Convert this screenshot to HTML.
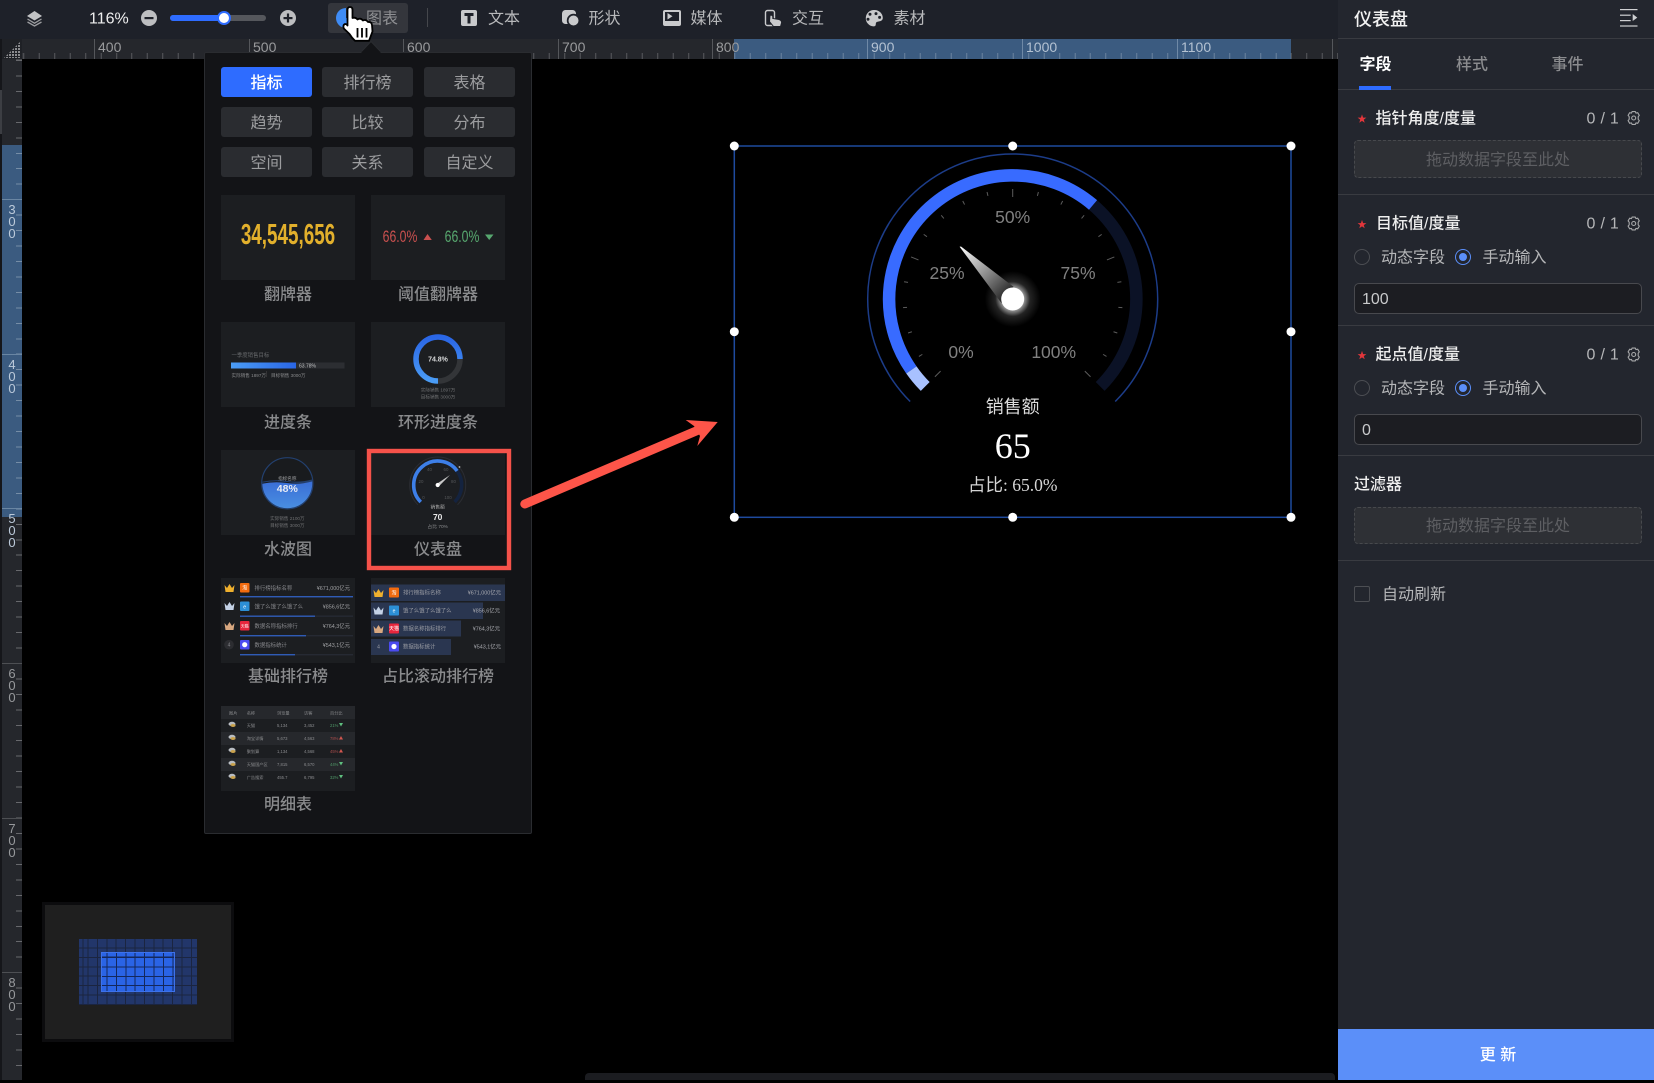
<!DOCTYPE html>
<html lang="zh-CN"><head><meta charset="utf-8"><title>仪表盘</title>
<style>
*{box-sizing:border-box;margin:0;padding:0}
html,body{width:1654px;height:1080px;overflow:hidden;background:#000;font-family:"Liberation Sans","Noto Sans CJK SC",sans-serif}
div,span{position:absolute}
.t{white-space:nowrap;transform:translateY(calc(-50% + 2px));line-height:1.3}
.m{white-space:nowrap;transform:translate(-50%,calc(-50% + 2px));line-height:1.3;text-align:center}
.btn{width:91px;height:30px;background:#2a2c30;border-radius:3px;color:#9c9d9f;font-size:16px;line-height:33px;text-align:center}
.lb{font-size:16px;color:#8a8b8d;font-weight:500}
.th{background:#1c1e21;width:134px;height:85px}
.hl{height:1px;left:1338px;width:316px;background:#393b41}
.sec{font-size:16px;color:#eee;font-weight:500}
.cnt{font-size:16px;color:#b5b6b8;letter-spacing:.3px}
.drop{left:1354px;width:288px;background:#2e3035;border:1px dashed #47494d;border-radius:4px;color:#5e5f63;font-size:16px;text-align:center}
.inp{left:1354px;width:288px;height:31px;background:#1c1d22;border:1px solid #48494e;border-radius:5px;color:#c8c9cb;font-size:16px;line-height:31px;padding-left:7px}
.r0{width:16px;height:16px;border:1px solid #4c4e53;border-radius:50%}
.r1{width:16px;height:16px;border:1px solid #5b8ff9;border-radius:50%}
.r1:after{content:"";position:absolute;left:3px;top:3px;width:8px;height:8px;background:#5b8ff9;border-radius:50%}
.op{font-size:16px;color:#b5b6b8}
.rn{font-size:14px;color:#9a9b9d;margin-top:-3px}
.rd{font-size:13px;color:#97999c;line-height:12px;width:20px;left:2px;text-align:center;letter-spacing:0;margin-top:1.5px}
.maj{background:#55575b}
.tool{font-size:16px;color:#b8b9bb}
</style></head>
<body>
<!-- toolbar -->
<div style="left:0;top:0;width:1338px;height:39px;background:#1e2129"></div>
<!-- ruler -->
<div style="left:0;top:39px;width:1338px;height:20px;background:#25272c"></div>
<div style="left:734px;top:39px;width:557px;height:20px;background:#3b5b80"></div>
<div style="left:22px;top:53px;width:1316px;height:6px;background:repeating-linear-gradient(90deg,rgba(255,255,255,.24) 0 1px,transparent 1px 15.46px);background-position:1.24px 0"></div>
<div class="maj" style="left:94px;top:39px;width:1px;height:20px"></div><span class="t rn" style="left:98px;top:47.5px">400</span>
<div class="maj" style="left:249px;top:39px;width:1px;height:20px"></div><span class="t rn" style="left:253px;top:47.5px">500</span>
<div class="maj" style="left:403px;top:39px;width:1px;height:20px"></div><span class="t rn" style="left:407px;top:47.5px">600</span>
<div class="maj" style="left:558px;top:39px;width:1px;height:20px"></div><span class="t rn" style="left:562px;top:47.5px">700</span>
<div class="maj" style="left:712px;top:39px;width:1px;height:20px"></div><span class="t rn" style="left:716px;top:47.5px">800</span>
<div style="left:867px;top:39px;width:1px;height:20px;background:#6f89a6"></div><span class="t rn" style="left:871px;top:47.5px;color:#b4c2d2">900</span>
<div style="left:1022px;top:39px;width:1px;height:20px;background:#6f89a6"></div><span class="t rn" style="left:1026px;top:47.5px;color:#b4c2d2">1000</span>
<div style="left:1177px;top:39px;width:1px;height:20px;background:#6f89a6"></div><span class="t rn" style="left:1181px;top:47.5px;color:#b4c2d2">1100</span>
<div class="maj" style="left:1332px;top:39px;width:1px;height:20px"></div>
<!-- left ruler -->
<div style="left:0;top:39px;width:2px;height:1041px;background:#15161a"></div>
<div style="left:0;top:90px;width:2px;height:44px;background:#3c3e43"></div>
<div style="left:2px;top:59px;width:20px;height:1021px;background:#25272c"></div>
<div style="left:2px;top:145px;width:20px;height:372px;background:#3b5b80"></div>
<div style="left:16px;top:59px;width:6px;height:1021px;background:repeating-linear-gradient(180deg,rgba(255,255,255,.3) 0 1px,transparent 1px 15.46px);background-position:0 1px"></div>
<div style="left:2px;top:199px;width:20px;height:1px;background:#6a86a3"></div>
<div style="left:2px;top:354px;width:20px;height:1px;background:#6a86a3"></div>
<div style="left:2px;top:508px;width:20px;height:1px;background:#6a86a3"></div>
<div style="left:2px;top:663px;width:20px;height:1px;background:#4d4f53"></div>
<div style="left:2px;top:818px;width:20px;height:1px;background:#4d4f53"></div>
<div style="left:2px;top:972px;width:20px;height:1px;background:#4d4f53"></div>
<div class="rd" style="top:202px;color:#bccada">3<br>0<br>0</div>
<div class="rd" style="top:357px;color:#bccada">4<br>0<br>0</div>
<div class="rd" style="top:511px;color:#bccada">5<br>0<br>0</div>
<div class="rd" style="top:666px">6<br>0<br>0</div>
<div class="rd" style="top:821px">7<br>0<br>0</div>
<div class="rd" style="top:975px">8<br>0<br>0</div>
<div style="left:2px;top:39px;width:20px;height:20px;background:#1f2126"></div>
<!-- bottom scrollbar -->
<div style="left:585px;top:1073px;width:750px;height:7px;background:#1b1c20;border-radius:4px 4px 0 0"></div>
<!-- minimap -->
<div style="left:42px;top:902px;width:192px;height:140px;background:#1f1f1f;border:3px solid #0c0c0e"></div>
<div style="left:79px;top:939px;width:118px;height:66px;background-color:#22366a;background-image:repeating-linear-gradient(90deg,#1b2540 0 1px,transparent 1px 9.4px),repeating-linear-gradient(180deg,#1b2540 0 1px,transparent 1px 9.4px);background-position:8.5px 8.5px"></div>
<div style="left:101px;top:952px;width:74px;height:40px;background-color:#2a64e6;border:1px solid #3d72ea;background-image:repeating-linear-gradient(90deg,#14285c 0 1px,transparent 1px 9.4px),repeating-linear-gradient(180deg,#14285c 0 1px,transparent 1px 9.4px);background-position:4.5px 4px"></div>
<!-- toolbar contents -->
<span class="t" style="left:89px;top:18px;font-size:16px;color:#eee">116%</span>
<div style="left:170px;top:15px;width:96px;height:6px;background:#55575c;border-radius:3px"></div>
<div style="left:170px;top:15px;width:54px;height:6px;background:#2e6cff;border-radius:3px"></div>
<div style="left:216.5px;top:11px;width:14px;height:14px;background:#fff;border:2px solid #2e6cff;border-radius:50%"></div>
<div style="left:328px;top:3px;width:80px;height:30px;background:#34363c;border-radius:3px"></div>
<span class="t tool" style="left:366px;top:18px;color:#8f9093">图表</span>
<div style="left:427px;top:8px;width:1px;height:19px;background:#45474c"></div>
<span class="t tool" style="left:488px;top:18px">文本</span>
<span class="t tool" style="left:588.5px;top:18px">形状</span>
<span class="t tool" style="left:690.5px;top:18px">媒体</span>
<span class="t tool" style="left:792px;top:18px">交互</span>
<span class="t tool" style="left:893.5px;top:18px">素材</span>
<!-- popup -->
<div style="left:204px;top:52px;width:328px;height:782px;background:#131417;border:1px solid #2a2c30;border-radius:2px"></div>
<div style="left:221px;top:67px;background:#2e6cff;color:#fff;font-weight:500" class="btn">指标</div>
<div style="left:322px;top:67px" class="btn">排行榜</div>
<div style="left:424px;top:67px" class="btn">表格</div>
<div style="left:221px;top:107px" class="btn">趋势</div>
<div style="left:322px;top:107px" class="btn">比较</div>
<div style="left:424px;top:107px" class="btn">分布</div>
<div style="left:221px;top:147px" class="btn">空间</div>
<div style="left:322px;top:147px" class="btn">关系</div>
<div style="left:424px;top:147px" class="btn">自定义</div>
<div class="th" style="left:221px;top:195px"></div><div class="th" style="left:371px;top:195px"></div>
<div class="th" style="left:221px;top:322px"></div><div class="th" style="left:371px;top:322px"></div>
<div class="th" style="left:221px;top:450px"></div><div class="th" style="left:371px;top:450px"></div>
<div class="th" style="left:221px;top:578px"></div><div class="th" style="left:371px;top:578px"></div>
<div class="th" style="left:221px;top:706px"></div>
<span class="m lb" style="left:288px;top:294px">翻牌器</span>
<span class="m lb" style="left:438px;top:294px">阈值翻牌器</span>
<span class="m lb" style="left:288px;top:421.5px">进度条</span>
<span class="m lb" style="left:438px;top:421.5px">环形进度条</span>
<span class="m lb" style="left:288px;top:549px">水波图</span>
<span class="m lb" style="left:438px;top:549px">仪表盘</span>
<span class="m lb" style="left:288px;top:676px">基础排行榜</span>
<span class="m lb" style="left:438px;top:676px">占比滚动排行榜</span>
<span class="m lb" style="left:288px;top:804px">明细表</span>
<!-- flip text -->
<span class="m" style="left:287.5px;top:236px;font-size:29px;font-weight:700;color:#e2b02c;transform:translate(-50%,-50%) scaleX(.65)">34,545,656</span>
<span class="m" style="left:400px;top:237px;font-size:17px;color:#c9504f;transform:translate(-50%,-50%) scaleX(.72)">66.0%</span>
<span class="m" style="left:461.5px;top:237px;font-size:17px;color:#57a86f;transform:translate(-50%,-50%) scaleX(.72)">66.0%</span>

<!-- right panel -->
<div style="left:1338px;top:0;width:316px;height:1080px;background:#23262e"></div>
<span class="t" style="left:1354px;top:17.5px;font-size:18px;color:#f2f2f2;font-weight:500">仪表盘</span>
<div class="hl" style="top:38px"></div>
<span class="t" style="left:1359.5px;top:64px;font-size:16px;color:#fff;font-weight:700">字段</span>
<span class="t" style="left:1456px;top:64px;font-size:16px;color:#8a8b8e;font-weight:500">样式</span>
<span class="t" style="left:1551.5px;top:64px;font-size:16px;color:#8a8b8e;font-weight:500">事件</span>
<div class="hl" style="top:89px"></div>
<div style="left:1359px;top:86px;width:32px;height:3.5px;background:#2e6cff"></div>
<span class="t sec" style="left:1375.5px;top:118px">指针角度/度量</span>
<span class="t cnt" style="left:1586.5px;top:118px">0 / 1</span>
<div class="drop" style="top:140px;height:38px;line-height:39px">拖动数据字段至此处</div>
<div class="hl" style="top:194px"></div>
<span class="t sec" style="left:1376px;top:223px">目标值/度量</span>
<span class="t cnt" style="left:1586.5px;top:223px">0 / 1</span>
<div class="r0" style="left:1354px;top:249px"></div><span class="t op" style="left:1381px;top:257px">动态字段</span>
<div class="r1" style="left:1455px;top:249px"></div><span class="t op" style="left:1482.5px;top:257px">手动输入</span>
<div class="inp" style="top:283px">100</div>
<div class="hl" style="top:325px"></div>
<span class="t sec" style="left:1375.5px;top:354px">起点值/度量</span>
<span class="t cnt" style="left:1586.5px;top:354px">0 / 1</span>
<div class="r0" style="left:1354px;top:380px"></div><span class="t op" style="left:1381px;top:388px">动态字段</span>
<div class="r1" style="left:1455px;top:380px"></div><span class="t op" style="left:1482.5px;top:388px">手动输入</span>
<div class="inp" style="top:414px">0</div>
<div class="hl" style="top:455px"></div>
<span class="t sec" style="left:1354px;top:484px">过滤器</span>
<div class="drop" style="top:507px;height:37px;line-height:38px">拖动数据字段至此处</div>
<div class="hl" style="top:560px"></div>
<div style="left:1354px;top:586px;width:16px;height:16px;border:1px solid #4c4e53;border-radius:2px"></div>
<span class="t op" style="left:1382px;top:594px">自动刷新</span>
<div style="left:1338px;top:1029px;width:316px;height:51px;background:#5b8ff9;color:#fff;font-size:16px;font-weight:500;text-align:center;line-height:54px;padding-left:4px">更 新</div>

<!-- graphics -->
<svg width="1654" height="1080" viewBox="0 0 1654 1080" style="position:absolute;left:0;top:0" font-family="'Liberation Sans','Noto Sans CJK SC',sans-serif">
<defs>
<linearGradient id="ring" x1="0" y1="0" x2="0" y2="1"><stop offset="0" stop-color="#2a66e6"/><stop offset="1" stop-color="#4a9cf5"/></linearGradient>
<linearGradient id="water" x1="0" y1="0" x2="0" y2="1"><stop offset="0" stop-color="#3a6ed6"/><stop offset="1" stop-color="#4a90e2"/></linearGradient>
<linearGradient id="bar" x1="0" y1="0" x2="1" y2="0"><stop offset="0" stop-color="#4a9cf5"/><stop offset="1" stop-color="#2a66e6"/></linearGradient>
<linearGradient id="needle" gradientUnits="userSpaceOnUse" x1="959.6" y1="246.7" x2="1007" y2="295"><stop offset="0" stop-color="#fff"/><stop offset=".55" stop-color="#8f8f8f"/><stop offset="1" stop-color="#2a2a2a"/></linearGradient>
<radialGradient id="glow"><stop offset=".4" stop-color="#fff" stop-opacity=".6"/><stop offset=".62" stop-color="#fff" stop-opacity=".14"/><stop offset="1" stop-color="#fff" stop-opacity="0"/></radialGradient>
<clipPath id="cw"><circle cx="287.3" cy="483.3" r="25"/></clipPath>
<pattern id="dots" width="3" height="3" patternUnits="userSpaceOnUse"><rect width="2" height="2" fill="#8c8d90"/></pattern>
<path id="crown" d="M0 1 2.5 4 5 0 7.5 4 10 1 9 8H1Z"/>
<polygon id="star" points="0,-4.6 1.1,-1.4 4.4,-1.4 1.8,.6 2.7,3.8 0,1.9 -2.7,3.8 -1.8,.6 -4.4,-1.4 -1.1,-1.4" fill="#e2363b"/>
<g id="gear" fill="none" stroke="#a8a9ab" stroke-width="1.1" stroke-linejoin="round"><path d="M-1.6-6.4H1.6L2.3-4.9 4-5.3 5.6-2.6 4.5-1.3V1.3L5.6 2.6 4 5.3 2.3 4.9 1.6 6.4H-1.6L-2.3 4.9-4 5.3-5.6 2.6-4.5 1.3V-1.3L-5.6-2.6-4-5.3-2.3-4.9Z"/><circle r="2"/></g>
</defs>

<!-- corner dots -->
<polygon points="4,58 21,58 21,41" fill="url(#dots)"/>

<!-- layers -->
<polygon points="34.5,11 42,16 34.5,20.5 27,16" fill="#c2c3c5"/>
<path d="M27.5 19 34.5 23.2 41.5 19M27.5 22 34.5 26 41.5 22" fill="none" stroke="#9b9c9f" stroke-width="1.3"/>
<!-- minus plus -->
<circle cx="149" cy="18" r="8" fill="#bdbec0"/><rect x="144.5" y="17" width="9" height="2.2" fill="#1e2129"/>
<circle cx="288" cy="18" r="8" fill="#bdbec0"/><rect x="283.5" y="17" width="9" height="2.2" fill="#1e2129"/><rect x="286.9" y="13.5" width="2.2" height="9" fill="#1e2129"/>
<!-- pie -->
<path d="M346 8A10 10 0 1 0 356 18H346Z" fill="#3f8cf5"/>
<rect x="347.5" y="8" width="4" height="9" fill="#5fb7d8"/>
<!-- toolbar icons -->
<rect x="461" y="10" width="16" height="16" rx="2" fill="#c9cacc"/>
<polygon points="464.5,13 473.5,13 473.5,16 470.5,16 470.5,23.5 467.5,23.5 467.5,16 464.5,16" fill="#1e2129"/>
<rect x="562" y="10" width="14" height="14" rx="3.5" fill="#c9cacc"/>
<circle cx="573.5" cy="20.5" r="6.7" fill="#1e2129"/><circle cx="573.5" cy="20.5" r="5" fill="#c9cacc"/>
<rect x="663" y="10" width="18" height="16" rx="2" fill="#c9cacc"/>
<rect x="665" y="12" width="14" height="9" fill="#1e2129"/>
<polygon points="667.5,13 667.5,19.5 672.5,16.2" fill="#c9cacc"/>
<rect x="765.5" y="10.5" width="9" height="15" rx="2" fill="none" stroke="#c9cacc" stroke-width="1.4"/>
<path d="M770 15.5Q772 14.5 772.8 16.5V18.5L779 19.5Q782 20.5 781.5 23L780.5 26.5H773.5L769.5 21.5Z" fill="#c9cacc" stroke="#1e2129" stroke-width="1"/>
<path d="M874.5 10A8.2 8.2 0 1 0 873.5 26.4C877 26.4 875 23 876.5 22.2 878 21.2 882.8 22 882.8 17.8 882.8 13.5 879 10 874.5 10Z" fill="#c9cacc"/>
<circle cx="870" cy="14.2" r="1.5" fill="#1e2129"/><circle cx="876" cy="13.6" r="1.5" fill="#1e2129"/><circle cx="879.6" cy="17.4" r="1.5" fill="#1e2129"/><circle cx="868" cy="19.2" r="1.5" fill="#1e2129"/>
<!-- popup caret -->
<polygon points="361,52 371,41.5 381,52" fill="#131417"/>
<path d="M361 52 371 41.5 381 52" fill="none" stroke="#2a2c30"/>
<rect x="361.5" y="51.5" width="19" height="2" fill="#131417"/>
<!-- hand cursor -->
<g fill="#fff" stroke="#000" stroke-width="1.8" stroke-linejoin="round">
<path d="M347.5 10Q347.5 7 350 7 352.5 7 352.5 10V18Q355.5 17 357.5 19.5 360.5 17.5 363 20.5 366 19 368 22 371.5 21.5 372 25L372.5 31.5 369 40.8H355Q351.5 37.5 349.5 34L343.8 28.5Q342.5 25 345 24 346.5 23.8 347.5 25.5Z"/>
</g>
<path d="M357.5 28V37.5M362 28V37.5M366.5 28V37.5" stroke="#000" stroke-width="1.8"/>

<!-- thresholds triangles -->
<polygon points="423.5,240 427.5,234 431.8,240" fill="#c9504f"/>
<polygon points="485,234.5 493.5,234.5 489.2,240" fill="#57a86f"/>

<!-- progress thumb -->
<text x="231.5" y="357" font-size="5.4" fill="#66686b">一季度销售目标</text>
<rect x="231" y="362.5" width="113.5" height="6" fill="#2c2e32"/>
<rect x="231" y="362.5" width="65" height="6" fill="url(#bar)"/>
<text x="299" y="367.7" font-size="5" fill="#bfc0c2">63.78%</text>
<text x="231.5" y="377" font-size="4.6" fill="#8a8b8d">实际销售 1897万</text>
<rect x="266" y="371" width=".6" height="6" fill="#444"/>
<text x="271" y="377" font-size="4.6" fill="#8a8b8d">目标销售 3000万</text>

<!-- ring thumb -->
<path d="M460 359A22 22 0 0 1 438 381" fill="none" stroke="#333538" stroke-width="5.5"/>
<path d="M438 381A22 22 0 1 1 460 359" fill="none" stroke="url(#ring)" stroke-width="5.5"/>
<text x="438" y="361.5" font-size="7" font-weight="700" fill="#d8d9da" text-anchor="middle">74.8%</text>
<text x="438" y="391.5" font-size="4.6" fill="#6f7072" text-anchor="middle">实际销售 1897万</text>
<text x="438" y="398.5" font-size="4.6" fill="#6f7072" text-anchor="middle">目标销售 3000万</text>

<!-- liquid thumb -->
<circle cx="287.3" cy="483.3" r="25.6" fill="#191b1e" stroke="#23406f" stroke-width="1.2"/>
<g clip-path="url(#cw)"><path d="M261 482Q274 479 287 481T314 479V482Q300 484 287 482T261 483Z" fill="#24406f"/><path d="M261 484Q274 481 287 483T314 481V510H261Z" fill="url(#water)"/></g>
<text x="287.3" y="480" font-size="4.6" fill="#9c9d9f" text-anchor="middle">指标名称</text>
<text x="287.3" y="492" font-size="10.5" font-weight="700" fill="#e9ecf5" text-anchor="middle">48%</text>
<text x="287.3" y="520" font-size="4.6" fill="#6f7072" text-anchor="middle">实际销售 2100万</text>
<text x="287.3" y="527" font-size="4.6" fill="#6f7072" text-anchor="middle">目标销售 3000万</text>

<!-- mini gauge -->
<path d="M417.9 504.8A28 28 0 1 1 457.5 504.8" fill="none" stroke="#2b2d33" stroke-width="1"/>
<path d="M457.12 470.9A24 24 0 0 1 454.67 501.97" fill="none" stroke="#14233f" stroke-width="3.6"/>
<path d="M420.73 501.97A24 24 0 1 1 457.12 470.9" fill="none" stroke="#3d7fe8" stroke-width="3.6"/>
<circle cx="459.5" cy="467" r=".9" fill="#bbb"/>
<g font-size="4.4" fill="#55575a" text-anchor="middle"><text x="423.5" y="499">0</text><text x="421" y="483">20</text><text x="429.5" y="471">40</text><text x="446" y="471">60</text><text x="453.5" y="483">80</text><text x="448" y="499">100</text></g>
<polygon points="450,475 438.8,486.4 436.6,484" fill="#c9c9c9"/><circle cx="437.7" cy="485" r="2.1" fill="#fff"/>
<text x="437.7" y="508.5" font-size="4.8" fill="#aaa" text-anchor="middle">销售额</text>
<text x="437.7" y="520" font-size="8.5" font-weight="700" fill="#e8e8e8" text-anchor="middle">70</text>
<text x="437.7" y="528" font-size="4.8" fill="#8a8b8d" text-anchor="middle">占比 70%</text>

<!-- rank basic -->
<g font-size="5.4" fill="#85868a">
<use href="#crown" transform="translate(224.5 584)" fill="#efb02e"/>
<use href="#crown" transform="translate(224.5 602)" fill="#c4d2e6"/>
<use href="#crown" transform="translate(224.5 622)" fill="#d8a880"/>
<circle cx="229" cy="644.7" r="4.8" fill="#2c2d31"/><text x="229" y="646.6" text-anchor="middle" font-size="5">4</text>
<rect x="240" y="583" width="9.5" height="9.5" rx="1" fill="#f26b0f"/>
<rect x="240" y="601.5" width="9.5" height="9.5" rx="1" fill="#2c8fd6"/>
<rect x="240" y="621" width="9.5" height="9.5" rx="1" fill="#e8263d"/>
<rect x="240" y="640" width="9.5" height="9.5" rx="1" fill="#4b4bf0"/>
<g fill="#fff" text-anchor="middle" font-size="5"><text x="244.7" y="589.7">淘</text><text x="244.7" y="608.5">e</text><text x="244.7" y="627.5" font-size="4">天猫</text></g>
<circle cx="244.7" cy="644.7" r="2.6" fill="#fff"/>
<text x="254.5" y="590">排行榜指标名称</text><text x="254.5" y="608.5">饿了么饿了么饿了么</text><text x="254.5" y="628">数据名称指标排行</text><text x="254.5" y="647">数据指标统计</text>
<g text-anchor="end" fill="#a0a1a4"><text x="350" y="590">¥671,000亿元</text><text x="350" y="608.5">¥856,6亿元</text><text x="350" y="628">¥764,3亿元</text><text x="350" y="647">¥543,1亿元</text></g>
</g>
<g fill="#262a33"><rect x="240" y="596" width="113" height="1.4"/><rect x="240" y="615.5" width="113" height="1.4"/><rect x="240" y="635" width="113" height="1.4"/><rect x="240" y="654" width="113" height="1.4"/></g>
<g fill="#2f5bb5"><rect x="240" y="596" width="113" height="1.4"/><rect x="240" y="615.5" width="75" height="1.4"/><rect x="240" y="635" width="66" height="1.4"/><rect x="240" y="654" width="55" height="1.4"/></g>

<!-- rank scroll -->
<g fill="#2a3650"><rect x="371" y="584.5" width="134" height="16.5"/><rect x="371" y="602.5" width="112" height="16.5"/><rect x="371" y="620.5" width="90" height="16"/><rect x="371" y="639" width="80" height="16"/></g>
<g font-size="5.4" fill="#9a9ca3">
<use href="#crown" transform="translate(373.5 589)" fill="#efb02e"/>
<use href="#crown" transform="translate(373.5 606.5)" fill="#c4d2e6"/>
<use href="#crown" transform="translate(373.5 625)" fill="#d8a880"/>
<text x="378.5" y="648.7" text-anchor="middle" font-size="5">4</text>
<rect x="389" y="587.5" width="10" height="10" rx="1" fill="#f26b0f"/>
<rect x="389" y="605.5" width="10" height="10" rx="1" fill="#2c8fd6"/>
<rect x="389" y="623.5" width="10" height="10" rx="1" fill="#e8263d"/>
<rect x="389" y="641.5" width="10" height="10" rx="1" fill="#4b4bf0"/>
<g fill="#fff" text-anchor="middle" font-size="5"><text x="394" y="594.3">淘</text><text x="394" y="612.5">e</text><text x="394" y="630">天猫</text></g>
<circle cx="394" cy="646.5" r="2.6" fill="#fff"/>
<text x="403" y="594.5">排行榜指标名称</text><text x="403" y="612.5">饿了么饿了么饿了么</text><text x="403" y="630.5">数据名称指标排行</text><text x="403" y="648.5">数据指标统计</text>
<g text-anchor="end" fill="#a9aab0"><text x="501" y="594.5">¥671,000亿元</text><text x="500" y="612.5">¥856,6亿元</text><text x="500" y="630.5">¥764,3亿元</text><text x="501" y="648.5">¥543,1亿元</text></g>
</g>

<!-- detail table -->
<rect x="221" y="706" width="134" height="13" fill="#26282c"/>
<rect x="221" y="732" width="134" height="13" fill="#26282c"/>
<rect x="221" y="758" width="134" height="13" fill="#26282c"/>
<g font-size="4.2" fill="#8a8b8e">
<text x="229" y="714.3">图片</text><text x="246.7" y="714.3">名称</text><text x="277" y="714.3">浏览量</text><text x="304" y="714.3">访客</text><text x="330" y="714.3">百分比</text>
<text x="246.7" y="727">天猫</text><text x="277" y="727">5,134</text><text x="304" y="727">3,452</text>
<text x="246.7" y="740">淘宝详情</text><text x="277" y="740">5,673</text><text x="304" y="740">4,563</text>
<text x="246.7" y="753">聚划算</text><text x="277" y="753">1,134</text><text x="304" y="753">4,568</text>
<text x="246.7" y="766">天猫国产区</text><text x="277" y="766">7,815</text><text x="304" y="766">6,570</text>
<text x="246.7" y="779">广告搜索</text><text x="277" y="779">455.7</text><text x="304" y="779">6,795</text>
<text x="330" y="727" fill="#4f9a68">21%</text><text x="330" y="740" fill="#a84c4c">78%</text><text x="330" y="753" fill="#a84c4c">45%</text><text x="330" y="766" fill="#4f9a68">44%</text><text x="330" y="779" fill="#4f9a68">32%</text>
</g>
<g fill="#5fbf7f"><polygon points="339,723 343,723 341,726.5"/><polygon points="339,762 343,762 341,765.5"/><polygon points="339,775 343,775 341,778.5"/></g>
<g fill="#d2574f"><polygon points="339,739.5 343,739.5 341,736"/><polygon points="339,752.5 343,752.5 341,749"/></g>
<g><ellipse cx="232" cy="724" rx="3.5" ry="2.2" fill="#b9bdc2"/><ellipse cx="233" cy="725.5" rx="2.6" ry="1.5" fill="#c9a24d"/><ellipse cx="232" cy="737" rx="3.5" ry="2.2" fill="#b9bdc2"/><ellipse cx="233" cy="738.5" rx="2.6" ry="1.5" fill="#c9a24d"/><ellipse cx="232" cy="750" rx="3.5" ry="2.2" fill="#b9bdc2"/><ellipse cx="233" cy="751.5" rx="2.6" ry="1.5" fill="#c9a24d"/><ellipse cx="232" cy="763" rx="3.5" ry="2.2" fill="#b9bdc2"/><ellipse cx="233" cy="764.5" rx="2.6" ry="1.5" fill="#c9a24d"/><ellipse cx="232" cy="776" rx="3.5" ry="2.2" fill="#b9bdc2"/><ellipse cx="233" cy="777.5" rx="2.6" ry="1.5" fill="#c9a24d"/></g>

<!-- red highlight -->
<rect x="369" y="451" width="140" height="117" fill="none" stroke="#f5524a" stroke-width="4.4"/>
<!-- red arrow -->
<line x1="524.8" y1="504" x2="702" y2="428.5" stroke="#fd5549" stroke-width="9" stroke-linecap="round"/>
<polygon points="717.7,422 685.7,420 694,426 700,436 697.3,446" fill="#fd5549"/>

<!-- selection box -->
<rect x="734.3" y="146" width="556.7" height="371.3" fill="none" stroke="#1e4a9e" stroke-width="1.5"/>

<!-- main gauge -->
<path d="M910.17 401.53A145 145 0 1 1 1115.23 401.53" fill="none" stroke="#1c3c88" stroke-width="1.5"/>
<path d="M925.23 386.47A123.7 123.7 0 1 1 1100.17 386.47" fill="none" stroke="#0b1226" stroke-width="12.5"/>
<path d="M911.4 369.95A123.7 123.7 0 0 1 1093.03 204.94" fill="none" stroke="#386bff" stroke-width="12.5"/>
<path d="M925.23 386.47A123.7 123.7 0 0 1 911.4 369.95" fill="none" stroke="#a8c1ff" stroke-width="12.5"/>
<g stroke="#5c5c5c" stroke-width="1">
<line x1="1012.7" y1="189" x2="1012.7" y2="197" transform="rotate(-135 1012.7 299)"/>
<line x1="1012.7" y1="189" x2="1012.7" y2="193" transform="rotate(-121.5 1012.7 299)"/>
<line x1="1012.7" y1="189" x2="1012.7" y2="193" transform="rotate(-108 1012.7 299)"/>
<line x1="1012.7" y1="189" x2="1012.7" y2="193" transform="rotate(-94.5 1012.7 299)"/>
<line x1="1012.7" y1="189" x2="1012.7" y2="193" transform="rotate(-81 1012.7 299)"/>
<line x1="1012.7" y1="189" x2="1012.7" y2="197" transform="rotate(-67.5 1012.7 299)"/>
<line x1="1012.7" y1="189" x2="1012.7" y2="193" transform="rotate(-54 1012.7 299)"/>
<line x1="1012.7" y1="189" x2="1012.7" y2="193" transform="rotate(-40.5 1012.7 299)"/>
<line x1="1012.7" y1="189" x2="1012.7" y2="193" transform="rotate(-27 1012.7 299)"/>
<line x1="1012.7" y1="189" x2="1012.7" y2="193" transform="rotate(-13.5 1012.7 299)"/>
<line x1="1012.7" y1="189" x2="1012.7" y2="197"/>
<line x1="1012.7" y1="189" x2="1012.7" y2="193" transform="rotate(13.5 1012.7 299)"/>
<line x1="1012.7" y1="189" x2="1012.7" y2="193" transform="rotate(27 1012.7 299)"/>
<line x1="1012.7" y1="189" x2="1012.7" y2="193" transform="rotate(40.5 1012.7 299)"/>
<line x1="1012.7" y1="189" x2="1012.7" y2="193" transform="rotate(54 1012.7 299)"/>
<line x1="1012.7" y1="189" x2="1012.7" y2="197" transform="rotate(67.5 1012.7 299)"/>
<line x1="1012.7" y1="189" x2="1012.7" y2="193" transform="rotate(81 1012.7 299)"/>
<line x1="1012.7" y1="189" x2="1012.7" y2="193" transform="rotate(94.5 1012.7 299)"/>
<line x1="1012.7" y1="189" x2="1012.7" y2="193" transform="rotate(108 1012.7 299)"/>
<line x1="1012.7" y1="189" x2="1012.7" y2="193" transform="rotate(121.5 1012.7 299)"/>
<line x1="1012.7" y1="189" x2="1012.7" y2="197" transform="rotate(135 1012.7 299)"/>
</g>
<g font-size="17.5" fill="#808080" text-anchor="middle">
<text x="1012.7" y="223">50%</text><text x="947" y="279">25%</text><text x="1078" y="279">75%</text><text x="961" y="358">0%</text><text x="1053.7" y="358">100%</text>
</g>
<circle cx="1012.7" cy="299" r="28" fill="url(#glow)"/>
<polygon points="959.6,246.7 961,246.5 1013.5,286.7 1001.4,303" fill="url(#needle)"/>
<circle cx="1012.7" cy="299" r="11.5" fill="#fff"/>
<text x="1012.7" y="413" font-size="18" fill="#dcdcdc" text-anchor="middle">销售额</text>
<text x="1012.7" y="458" font-size="36" fill="#fff" text-anchor="middle" font-family="'Liberation Serif',serif">65</text>
<text x="1012.7" y="491" font-size="17.5" fill="#d4d4d4" text-anchor="middle" font-family="'Liberation Serif','Noto Sans CJK SC',serif">占比: 65.0%</text>
<g fill="#fff">
<circle cx="734.3" cy="146" r="4.5"/><circle cx="1012.7" cy="146" r="4.5"/><circle cx="1291" cy="146" r="4.5"/>
<circle cx="734.3" cy="331.7" r="4.5"/><circle cx="1291" cy="331.7" r="4.5"/>
<circle cx="734.3" cy="517.3" r="4.5"/><circle cx="1012.7" cy="517.3" r="4.5"/><circle cx="1291" cy="517.3" r="4.5"/>
</g>

<!-- panel icons -->
<g fill="#cfd0d2"><rect x="1620" y="9" width="17.5" height="1.2"/><rect x="1620" y="14.6" width="10.7" height="1.2"/><rect x="1620" y="20" width="10.7" height="1.2"/><rect x="1620" y="25.4" width="17.5" height="1.2"/><polygon points="1632.7,14 1637.3,17.6 1632.7,21"/></g>
<use href="#star" x="1362" y="119"/><use href="#star" x="1362" y="224.5"/><use href="#star" x="1362" y="355.5"/>
<use href="#gear" x="1633.7" y="118"/><use href="#gear" x="1633.7" y="223.5"/><use href="#gear" x="1633.7" y="354.5"/>
</svg>
</body></html>
